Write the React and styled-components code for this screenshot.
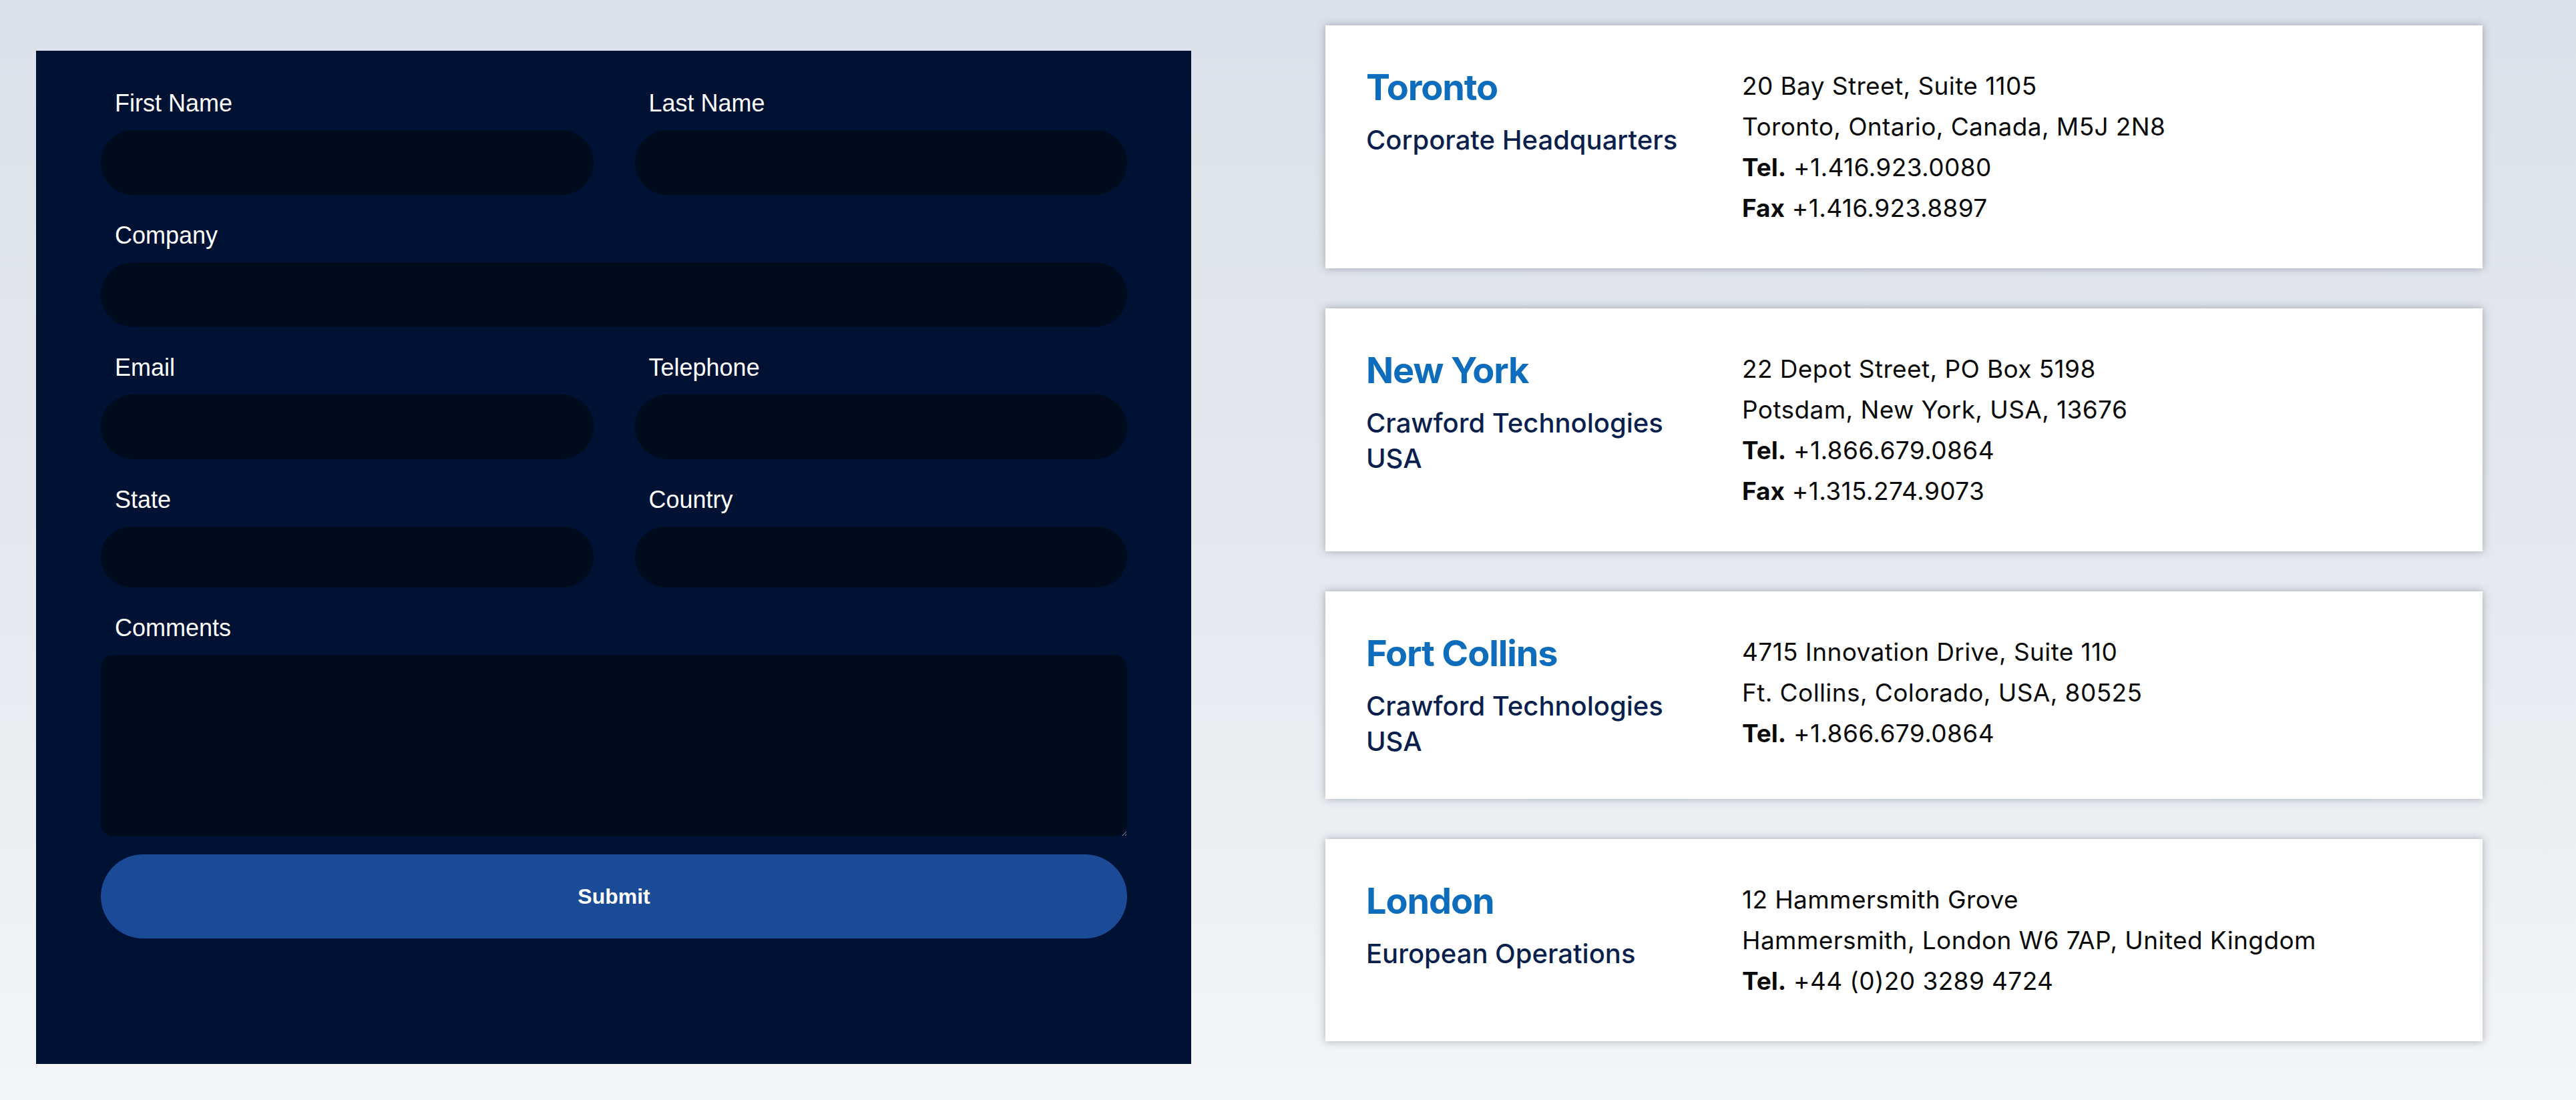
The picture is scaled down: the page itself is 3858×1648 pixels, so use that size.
import React from 'react'
import styled, { createGlobalStyle } from 'styled-components'

const GlobalStyle = createGlobalStyle`
  html, body {
    margin: 0;
    padding: 0;
  }
  body {
    min-height: 100vh;
    background: linear-gradient(180deg, #dce1e9 0%, #e6e9ee 55%, #f4f5f7 100%);
    font-family: "Inter", "Noto Sans", sans-serif;
  }
`

const Page = styled.div`
  display: flex;
  align-items: flex-start;
  gap: 201px;
  padding: 38px 0 0 54px;
  min-height: 100vh;
  box-sizing: border-box;
`

const FormPanel = styled.form`
  width: 1730px;
  margin-top: 38px;
  box-sizing: border-box;
  padding: 59px 96px 188px 97px;
  background: #001233;
  font-family: "Liberation Sans", Arial, sans-serif;
`

const FieldGrid = styled.div`
  display: grid;
  grid-template-columns: 1fr 1fr;
  column-gap: 62px;
`

const Field = styled.div`
  grid-column: ${p => (p.$wide ? '1 / -1' : 'auto')};
  margin-bottom: 41px;
`

const Label = styled.label`
  display: block;
  padding-left: 21px;
  margin-bottom: 20px;
  font-size: 36px;
  line-height: 40px;
  color: #ffffff;
`

const TextInput = styled.input`
  display: block;
  width: 100%;
  height: ${p => (p.$short ? '91px' : '97px')};
  box-sizing: border-box;
  padding: 0 40px;
  border: none;
  border-radius: 49px;
  background: #000b1d;
  color: #ffffff;
  font: inherit;
  font-size: 35px;
  outline: none;
  appearance: none;
`

const Comments = styled.textarea`
  display: block;
  width: 100%;
  height: 272px;
  box-sizing: border-box;
  padding: 24px 30px;
  border: none;
  border-radius: 20px;
  background: #000b1d;
  color: #ffffff;
  font: inherit;
  font-size: 35px;
  outline: none;
  color-scheme: dark;
`

const CommentsField = styled.div`
  margin-bottom: 27px;
`

const SubmitButton = styled.button`
  display: block;
  width: 100%;
  height: 126px;
  border: none;
  border-radius: 63px;
  background: #1b4a97;
  color: #ffffff;
  font-family: "Liberation Sans", Arial, sans-serif;
  font-weight: 700;
  font-size: 32px;
  cursor: pointer;
`

const Offices = styled.div`
  display: flex;
  flex-direction: column;
  gap: 60px;
  width: 1733px;
`

const OfficeCard = styled.div`
  display: grid;
  grid-template-columns: 563px 1fr;
  padding: 60px 61px;
  background: #ffffff;
  box-shadow: 0 0 12px rgba(40, 50, 70, 0.36);
`

const OfficeName = styled.div`
  display: flex;
  flex-direction: column;
  gap: 20px;
  width: 500px;
`

const City = styled.h3`
  margin: 0;
  font-size: 54px;
  line-height: 65px;
  font-weight: 650;
  letter-spacing: -1.1px;
  color: #0e6cbc;
`

const Division = styled.div`
  font-size: 40px;
  line-height: 53px;
  font-weight: 500;
  color: #0b1f4c;
`

const Address = styled.div`
  font-size: 37px;
  line-height: 61px;
  letter-spacing: 0.4px;
  color: #0a0a0a;

  b {
    font-weight: 700;
    letter-spacing: 0;
  }
`

const offices = [
  {
    city: 'Toronto',
    division: 'Corporate Headquarters',
    lines: ['20 Bay Street, Suite 1105', 'Toronto, Ontario, Canada, M5J 2N8'],
    tel: '+1.416.923.0080',
    fax: '+1.416.923.8897',
  },
  {
    city: 'New York',
    division: 'Crawford Technologies USA',
    lines: ['22 Depot Street, PO Box 5198', 'Potsdam, New York, USA, 13676'],
    tel: '+1.866.679.0864',
    fax: '+1.315.274.9073',
  },
  {
    city: 'Fort Collins',
    division: 'Crawford Technologies USA',
    lines: ['4715 Innovation Drive, Suite 110', 'Ft. Collins, Colorado, USA, 80525'],
    tel: '+1.866.679.0864',
  },
  {
    city: 'London',
    division: 'European Operations',
    lines: ['12 Hammersmith Grove', 'Hammersmith, London W6 7AP, United Kingdom'],
    tel: '+44 (0)20 3289 4724',
  },
]

const fields = [
  { id: 'first', label: 'First Name' },
  { id: 'last', label: 'Last Name' },
  { id: 'company', label: 'Company', wide: true },
  { id: 'email', label: 'Email', type: 'email' },
  { id: 'phone', label: 'Telephone', type: 'tel' },
  { id: 'state', label: 'State', short: true },
  { id: 'country', label: 'Country', short: true },
]

export default function App() {
  return (
    <>
      <GlobalStyle />
      <Page>
        <FormPanel onSubmit={e => e.preventDefault()}>
          <FieldGrid>
            {fields.map(f => (
              <Field key={f.id} $wide={f.wide}>
                <Label htmlFor={f.id}>{f.label}</Label>
                <TextInput id={f.id} type={f.type || 'text'} $short={f.short} />
              </Field>
            ))}
          </FieldGrid>
          <CommentsField>
            <Label htmlFor="comments">Comments</Label>
            <Comments id="comments" />
          </CommentsField>
          <SubmitButton type="submit">Submit</SubmitButton>
        </FormPanel>

        <Offices>
          {offices.map(o => (
            <OfficeCard key={o.city}>
              <OfficeName>
                <City>{o.city}</City>
                <Division>{o.division}</Division>
              </OfficeName>
              <Address>
                {o.lines.map(l => (
                  <div key={l}>{l}</div>
                ))}
                <div><b>Tel.</b> {o.tel}</div>
                {o.fax && <div><b>Fax</b> {o.fax}</div>}
              </Address>
            </OfficeCard>
          ))}
        </Offices>
      </Page>
    </>
  )
}
